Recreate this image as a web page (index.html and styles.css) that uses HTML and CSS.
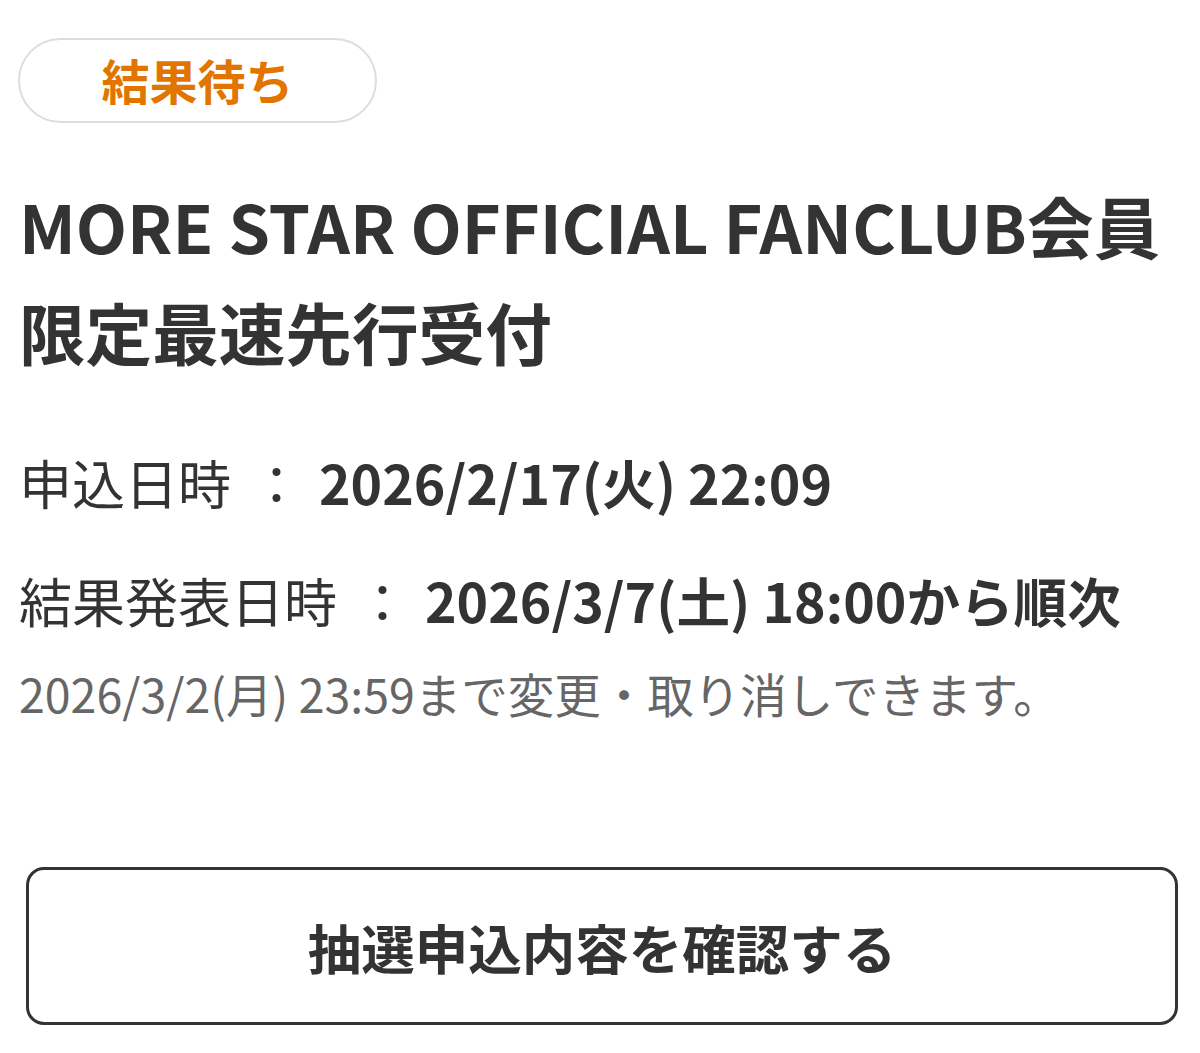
FILE: index.html
```html
<!DOCTYPE html>
<html lang="ja">
<head>
    <meta charset="UTF-8">
    <meta name="viewport" content="width=device-width, initial-scale=1.0">
    <title>抽選申込</title>
    <link rel="stylesheet" href="styles.css">
</head>
<body>
    <div class="entry">
        <div class="status">結果待ち</div>

        <h1 class="title">MORE STAR OFFICIAL FANCLUB会員限定最速先行受付</h1>

        <dl class="info">
            <div class="info-row">
                <dt>申込日時</dt>
                <dd>2026/2/17(火) 22:09</dd>
            </div>
            <div class="info-row">
                <dt>結果発表日時</dt>
                <dd>2026/3/7(土) 18:00から順次</dd>
            </div>
        </dl>
        <p class="note">2026/3/2(月) 23:59まで変更・取り消しできます。</p>

        <button type="button" class="confirm">抽選申込内容を確認する</button>
    </div>
</body>
</html>
```

FILE: styles.css
```css
body {
    margin: 0;
    background: #fff;
    color: #333;
    font-family: "Noto Sans CJK JP", "Noto Sans", sans-serif;
}

.entry {
    padding: 38px 20px 20px 19px;
}

/* ステータスバッジ */
.status {
    width: 355px;
    height: 77px;
    margin-left: -1px;
    padding-bottom: 4px;
    border: 2px solid #ddd;
    border-radius: 45px;
    display: flex;
    align-items: center;
    justify-content: center;
    color: #e27500;
    font-size: 48px;
    font-weight: bold;
}

.title {
    margin: 49px 0 0 0;
    font-size: 66.6px;
    line-height: 106px;
    font-weight: bold;
    color: #333;
}

.info {
    margin: 58px 0 0 0;
}

.info-row {
    display: flex;
    align-items: baseline;
    font-size: 53px;
    line-height: 80px;
    margin-bottom: 38px;
}

.info-row:last-child {
    margin-bottom: 0;
}

.info-row dt {
    font-weight: normal;
}

.info-row dt::after {
    content: "：";
    margin: 0 16px 0 19px;
}

.info-row dd {
    margin: 0;
    font-weight: bold;
    font-size: 53.6px;
}

.note {
    margin: 22px 0 0 0;
    font-size: 46.5px;
    line-height: 62px;
    color: #666;
}

.confirm {
    display: block;
    width: 1152px;
    height: 158px;
    margin: 143px 0 0 7px;
    border: 3px solid #333;
    border-radius: 18px;
    background: #fff;
    color: #333;
    font-family: inherit;
    font-size: 53.5px;
    font-weight: bold;
}
```
